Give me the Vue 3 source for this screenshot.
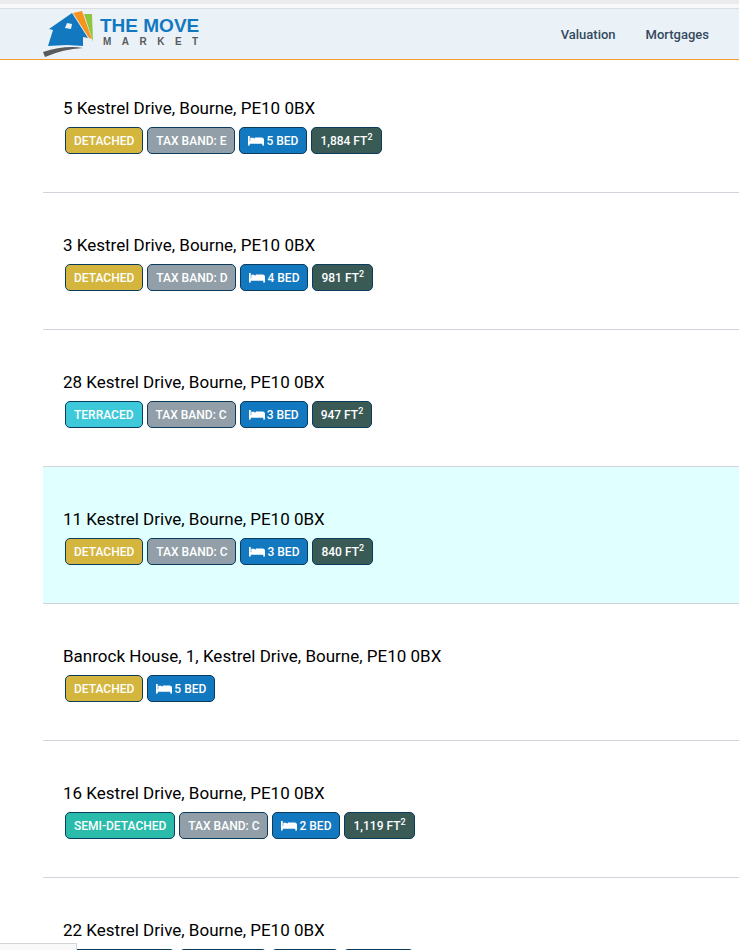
<template>
  <div class="page">
    <div class="top-strip"></div>
    <header class="header">
      <a href="#" class="logo" aria-label="The Move Market">
        <svg class="logo-mark" width="53" height="48" viewBox="0 0 53 48">
          <path d="M30 3 L39 1 L49 29 L46 28 Z" fill="#f7941e" />
          <path d="M41 4 L49 4 L50 32 L48 25 Z" fill="#8cc63f" />
          <path d="M6 19 L29 3 L45 28 L40 27 L40 36 L24 35 L5 36 L10 20 Z" fill="#1278c0" />
          <path d="M24 13 L29 14 L28 19 L22 18 Z" fill="#ecf3f9" />
          <path d="M0 42 Q22 35 40 38 Q20 39 2 47 Z" fill="#595a5c" />
        </svg>
        <span class="logo-text">
          <span class="logo-name">THE MOVE</span>
          <span class="logo-sub">
            <span v-for="(letter, index) in 'MARKET'" :key="index">{{ letter }}</span>
          </span>
        </span>
      </a>
      <nav class="nav">
        <a href="#">Valuation</a>
        <a href="#">Mortgages</a>
      </nav>
    </header>

    <main class="listings">
      <article
        v-for="home in homes"
        :key="home.address"
        class="listing"
        :class="{ highlighted: home.highlighted }"
      >
        <h2 class="address">{{ home.address }}</h2>
        <div class="badges">
          <span class="badge" :class="home.type">{{ home.type }}</span>
          <span v-if="home.band" class="badge band">Tax band: {{ home.band }}</span>
          <span class="badge beds">
            <svg class="bed-icon" width="16" height="12" viewBox="0 0 640 480">
              <path d="M0 40h70v210h500v-20h70v190h-70v-70H70v70H0zM90 110h120l40 40 30-50h270c50 0 90 40 90 90v90H90z" />
            </svg>
            {{ home.beds }} Bed
          </span>
          <span v-if="home.area" class="badge area">{{ home.area }} ft<sup>2</sup></span>
        </div>
      </article>
    </main>

    <div class="status-bar"></div>
  </div>
</template>

<script setup>
import { ref } from 'vue';

const homes = ref([
  { address: '5 Kestrel Drive, Bourne, PE10 0BX', type: 'detached', band: 'E', beds: 5, area: '1,884' },
  { address: '3 Kestrel Drive, Bourne, PE10 0BX', type: 'detached', band: 'D', beds: 4, area: '981' },
  { address: '28 Kestrel Drive, Bourne, PE10 0BX', type: 'terraced', band: 'C', beds: 3, area: '947' },
  { address: '11 Kestrel Drive, Bourne, PE10 0BX', type: 'detached', band: 'C', beds: 3, area: '840', highlighted: true },
  { address: 'Banrock House, 1, Kestrel Drive, Bourne, PE10 0BX', type: 'detached', beds: 5 },
  { address: '16 Kestrel Drive, Bourne, PE10 0BX', type: 'semi-detached', band: 'C', beds: 2, area: '1,119' },
  { address: '22 Kestrel Drive, Bourne, PE10 0BX', type: 'semi-detached', band: 'E', beds: 3, area: '1,076' }
]);
</script>

<style>
body {
  margin: 0;
  background: #fff;
}
</style>

<style scoped>
.page {
  height: 100vh;
  overflow: hidden;
  font-family: Roboto, 'Liberation Sans', sans-serif;
  color: #000;
}

.page * {
  box-sizing: border-box;
}

.top-strip {
  height: 9px;
  background: #f8f8f9;
  border-top: 4px solid #ebebed;
  border-bottom: 1px solid #dcdde0;
}

.header {
  display: flex;
  align-items: center;
  justify-content: space-between;
  height: 51px;
  padding: 0 30px 0 43px;
  background: #eaf2f8;
  border-bottom: 1px solid #f39a2d;
}

.logo {
  display: flex;
  gap: 4px;
  text-decoration: none;
}

.logo-text {
  display: flex;
  flex-direction: column;
  padding-top: 6px;
  font-family: 'Liberation Sans', Arial, sans-serif;
  font-weight: 700;
}

.logo-name {
  font-size: 19px;
  line-height: 20px;
  color: #1278c0;
}

.logo-sub {
  display: flex;
  justify-content: space-between;
  padding: 0 1px 0 3px;
  font-size: 10px;
  line-height: 12px;
  color: #595a5c;
}

.nav {
  display: flex;
  gap: 30px;
}

.nav a {
  font-size: 13px;
  line-height: 20px;
  padding-top: 2px;
  font-weight: 500;
  color: #34495e;
  text-decoration: none;
}

.listings {
  margin-left: 43px;
}

.listing {
  height: 137px;
  padding: 40px 20px 0;
  border-bottom: 1px solid #ced4da;
}

.listing:first-child {
  height: 133px;
  padding-top: 36px;
}

.highlighted {
  background: #e0ffff;
}

.address {
  margin: 0;
  font-size: 17px;
  line-height: 24px;
  font-weight: 400;
}

.badges {
  display: flex;
  gap: 4px;
  padding: 7px 2px 0;
}

.badge {
  height: 27px;
  padding: 0 8px;
  border: 1px solid #0b3c5d;
  border-radius: 5px;
  font-size: 12px;
  line-height: 27px;
  font-weight: 500;
  text-transform: uppercase;
  white-space: nowrap;
  color: #fff;
}

.badge sup {
  font-size: 9px;
  line-height: 0;
}

.detached {
  background: #d4b63e;
}

.terraced {
  background: #3ec9db;
}

.semi-detached {
  background: #2abbaa;
}

.band {
  background: #929fa9;
}

.beds {
  display: flex;
  gap: 2px;
  background: #1278c0;
}

.bed-icon {
  align-self: center;
  fill: #fff;
}

.area {
  background: #3a5a56;
}

.status-bar {
  position: fixed;
  left: 0;
  bottom: 0;
  width: 77px;
  height: 7px;
  background: #f8f8f8;
  border: 1px solid #d5d5d5;
  border-width: 1px 1px 0 0;
}
</style>
